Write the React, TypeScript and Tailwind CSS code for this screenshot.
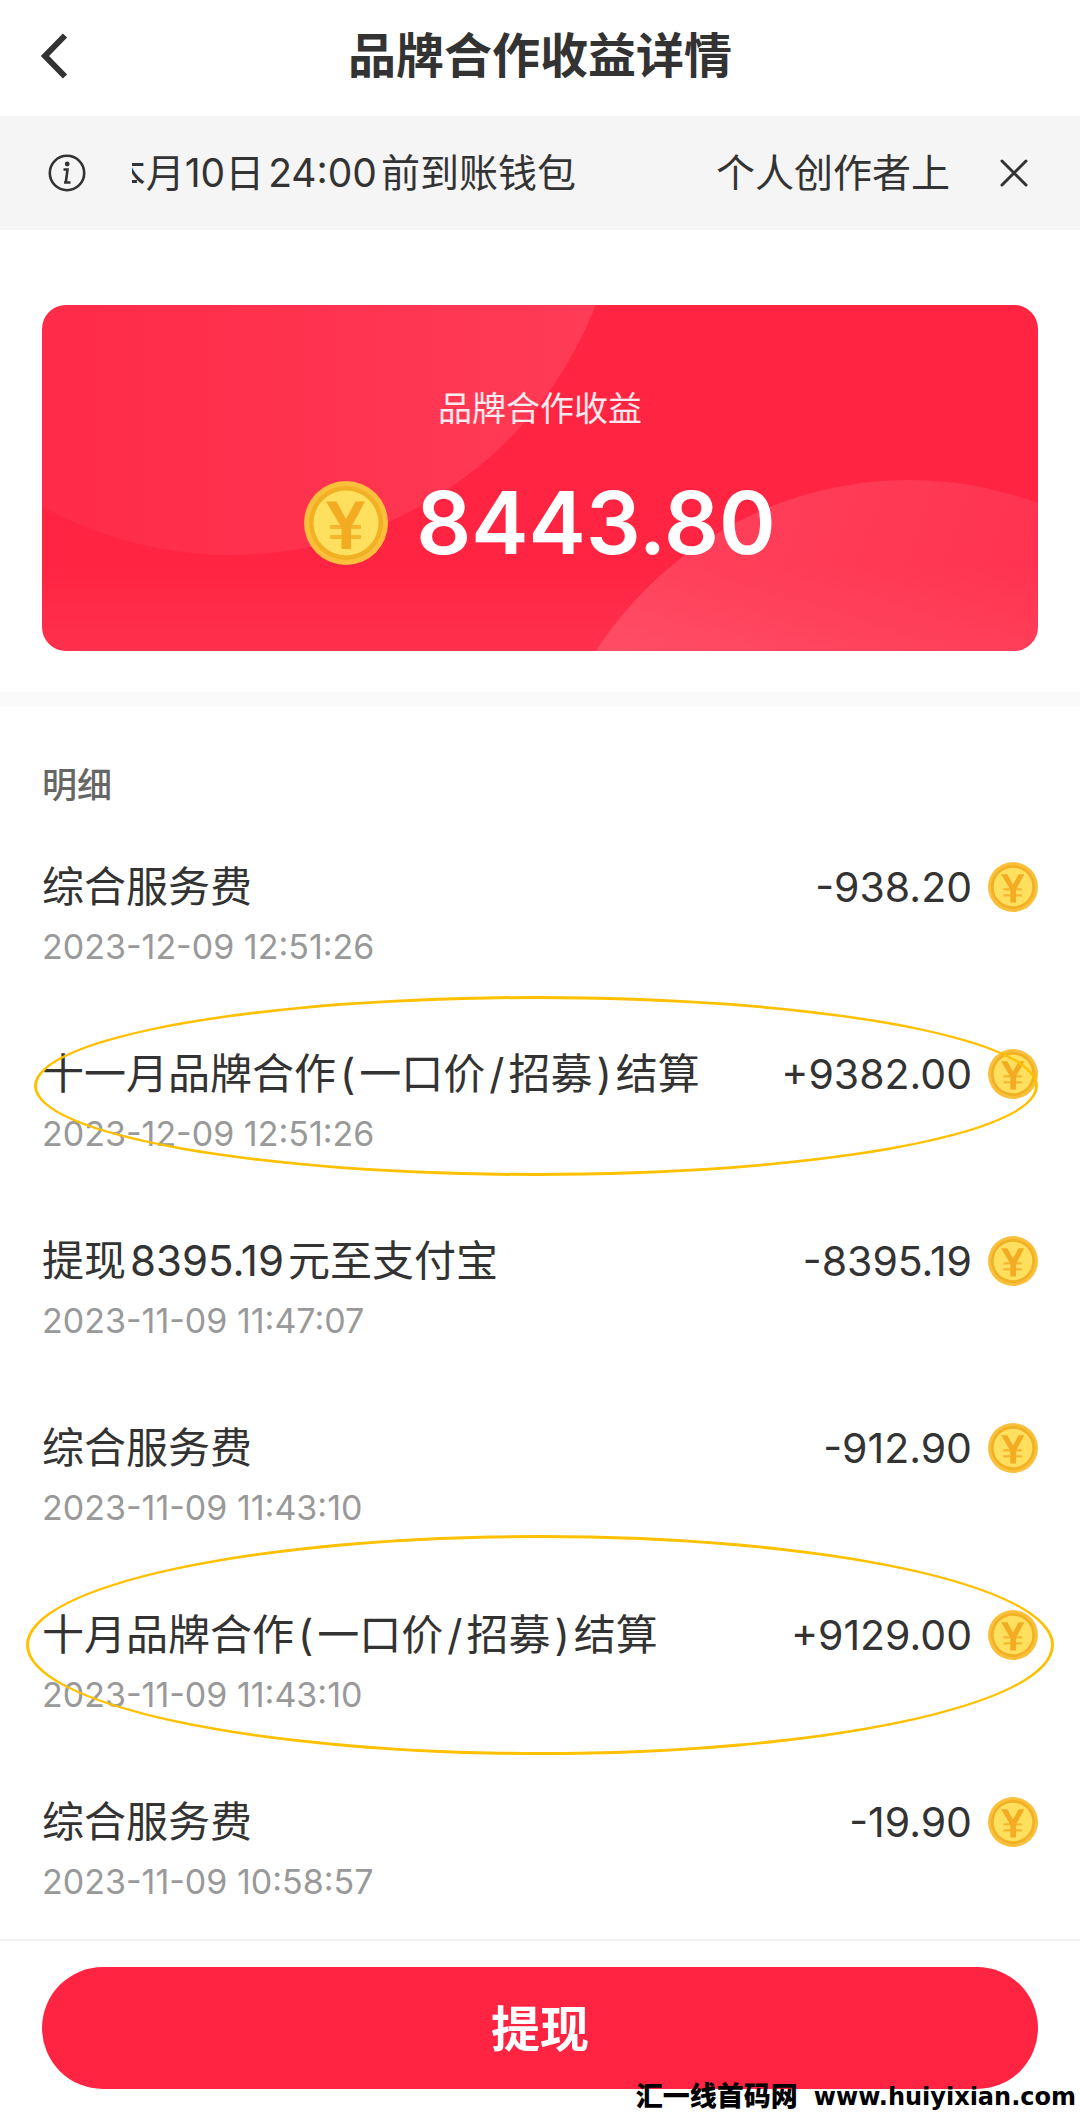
import React from 'react';

interface Entry {
  id: number;
  title: string;
  time: string;
  amount: string;
  // extra classes for the hand-drawn ring around the row
  ring?: string;
}

const entries: Entry[] = [
  { id: 1, title: '综合服务费', time: '2023-12-09 12:51:26', amount: '-938.20' },
  {
    id: 2,
    title: '十一月品牌合作(一口价/招募)结算',
    time: '2023-12-09 12:51:26',
    amount: '+9382.00',
    ring: '-left-2 right-0 -top-12 h-[180px]',
  },
  { id: 3, title: '提现8395.19元至支付宝', time: '2023-11-09 11:47:07', amount: '-8395.19' },
  { id: 4, title: '综合服务费', time: '2023-11-09 11:43:10', amount: '-912.90' },
  {
    id: 5,
    title: '十月品牌合作(一口价/招募)结算',
    time: '2023-11-09 11:43:10',
    amount: '+9129.00',
    ring: '-left-4 -right-4 -top-[70px] h-[220px]',
  },
  { id: 6, title: '综合服务费', time: '2023-11-09 10:58:57', amount: '-19.90' },
];

const Coin: React.FC<{ className: string }> = ({ className }) => (
  <svg viewBox="0 0 84 84" className={className} aria-hidden="true">
    <circle cx="42" cy="42" r="42" fill="#fac03c" />
    <circle cx="42" cy="42" r="37" fill="#f2b024" />
    <circle cx="42" cy="42" r="32.5" fill="#ffdf5e" />
    <g fill="#f3ab22">
      <path d="M22 20.5h10.5L42 38l9.5-17.5H61L47 46.5V68H37.5V46.5z" />
      <rect x="26" y="44" width="31" height="4" rx="1" opacity="0.8" />
      <rect x="26" y="54" width="31" height="4" rx="1" opacity="0.8" />
    </g>
  </svg>
);

// Chinese text with a little air around numbers and punctuation
const MixedText: React.FC<{ text: string }> = ({ text }) => (
  <span>
    {text.split(/([()/]|\d[\d.:]{3,})/).map((part, i) =>
      i % 2 ? <span key={i} className="mx-1">{part}</span> : part
    )}
  </span>
);

const Header: React.FC = () => (
  <header className="grid grid-cols-[80px_1fr_80px] items-center h-[116px] px-7 pb-1">
    <button type="button" aria-label="返回" className="w-[52px] h-[60px] flex items-center justify-center">
      <svg viewBox="0 0 52 60" className="w-full h-full" fill="none" stroke="#333" strokeWidth="6">
        <path d="M37 9.5L17 30l20 20.5" />
      </svg>
    </button>
    <h1 className="text-center text-5xl leading-[60px] font-semibold">品牌合作收益详情</h1>
  </header>
);

const Notice: React.FC = () => (
  <div className="flex items-center h-[114px] pl-12 pr-[52px] bg-[#f5f5f5]">
    <svg viewBox="0 0 38 38" className="w-[38px] h-[38px] shrink-0" fill="none" stroke="#333" strokeWidth="2.6">
      <circle cx="19" cy="19" r="17.2" />
      <path d="M15.5 15.5h4L17.8 28.500M16 28.500h6.500" />
      <circle cx="19.200" cy="10" r="2.400" fill="#333" stroke="none" />
    </svg>
    <div className="flex-1 min-w-0 ml-[46px] mr-[50px] flex justify-end gap-[140px] overflow-hidden whitespace-nowrap text-[39px]">
      <MixedText text="本月10日24:00前到账钱包" />
      <span>个人创作者上</span>
    </div>
    <button type="button" aria-label="关闭" className="shrink-0">
      <svg viewBox="0 0 28 28" className="w-7 h-7" fill="none" stroke="#333" strokeWidth="3" strokeLinecap="round">
        <path d="M2 2l24 24M26 2L2 26" />
      </svg>
    </button>
  </div>
);

const BalanceCard: React.FC = () => (
  <section className="relative mx-[42px] mt-[75px] mb-[41px] h-[346px] rounded-3xl overflow-hidden bg-[#ff2442] text-white">
    <svg
      viewBox="0 0 996 346"
      preserveAspectRatio="none"
      className="absolute inset-0 w-full h-full"
      aria-hidden="true"
    >
      <defs>
        <linearGradient id="glowA" x1="0" y1="0" x2="1" y2="0">
          <stop offset="0.25" stopColor="#fff" stopOpacity="0.03" />
          <stop offset="1" stopColor="#fff" stopOpacity="0.11" />
        </linearGradient>
        <linearGradient id="glowB" x1="0" y1="0" x2="0.9" y2="0.3">
          <stop offset="0" stopColor="#fff" stopOpacity="0.16" />
          <stop offset="1" stopColor="#fff" stopOpacity="0.03" />
        </linearGradient>
        <linearGradient id="floor" x1="0" y1="0" x2="0" y2="1">
          <stop offset="0.75" stopColor="#fff" stopOpacity="0" />
          <stop offset="1" stopColor="#fff" stopOpacity="0.06" />
        </linearGradient>
      </defs>
      <rect width="996" height="346" fill="url(#floor)" />
      <circle cx="189" cy="-141" r="391" fill="url(#glowA)" />
      <circle cx="867" cy="547" r="372" fill="url(#glowB)" />
    </svg>
    <div className="relative flex flex-col items-center pt-20">
      <p className="text-[34px] leading-[48px] text-white/90">品牌合作收益</p>
      <div className="mt-10 flex items-center gap-7">
        <Coin className="w-[84px] h-[84px]" />
        <span className="text-[86px] leading-[100px] font-semibold">8443.80</span>
      </div>
    </div>
  </section>
);

const EntryRow: React.FC<{ entry: Entry }> = ({ entry }) => (
  <li className="relative">
    <div className="flex items-center justify-between text-[42px] leading-[60px]">
      <MixedText text={entry.title} />
      <span className="flex items-center gap-4 text-[41px]">
        {entry.amount}
        <Coin className="w-[50px] h-[50px]" />
      </span>
    </div>
    <p className="mt-2 text-[34px] leading-[44px] text-[#999]">{entry.time}</p>
    {entry.ring && (
      <div className={`absolute rounded-[50%] border-[3px] border-[#ffc000] pointer-events-none ${entry.ring}`} />
    )}
  </li>
);

export default function App() {
  return (
    <div
      lang="zh-CN"
      className="relative min-h-screen flex flex-col bg-white text-[#333] font-[Inter,'Noto_Sans_CJK_SC',sans-serif]"
    >
      <Header />
      <Notice />
      <main className="flex-1">
        <BalanceCard />
        <div className="h-[15px] bg-[#fafafa]" />
        <section className="px-[42px] pt-[54px]">
          <h2 className="text-[35px] leading-[48px] font-medium text-[#666]">明细</h2>
          <ul className="mt-12 flex flex-col gap-[75px]">
            {entries.map(e => (
              <EntryRow key={e.id} entry={e} />
            ))}
          </ul>
        </section>
      </main>
      <footer className="border-t-2 border-[#f2f2f2] px-[42px] pt-[26px] pb-6">
        <button type="button" className="w-full h-[122px] pt-1 rounded-full bg-[#ff2442] text-white text-[49px] font-semibold">
          提现
        </button>
      </footer>
      <div className="absolute right-1 bottom-0 flex items-center gap-4 text-black leading-8 whitespace-nowrap">
        <span className="text-[27px] font-black">汇一线首码网</span>
        <span className="text-2xl leading-8 font-bold font-['DejaVu_Sans',sans-serif]">www.huiyixian.com</span>
      </div>
    </div>
  );
}
